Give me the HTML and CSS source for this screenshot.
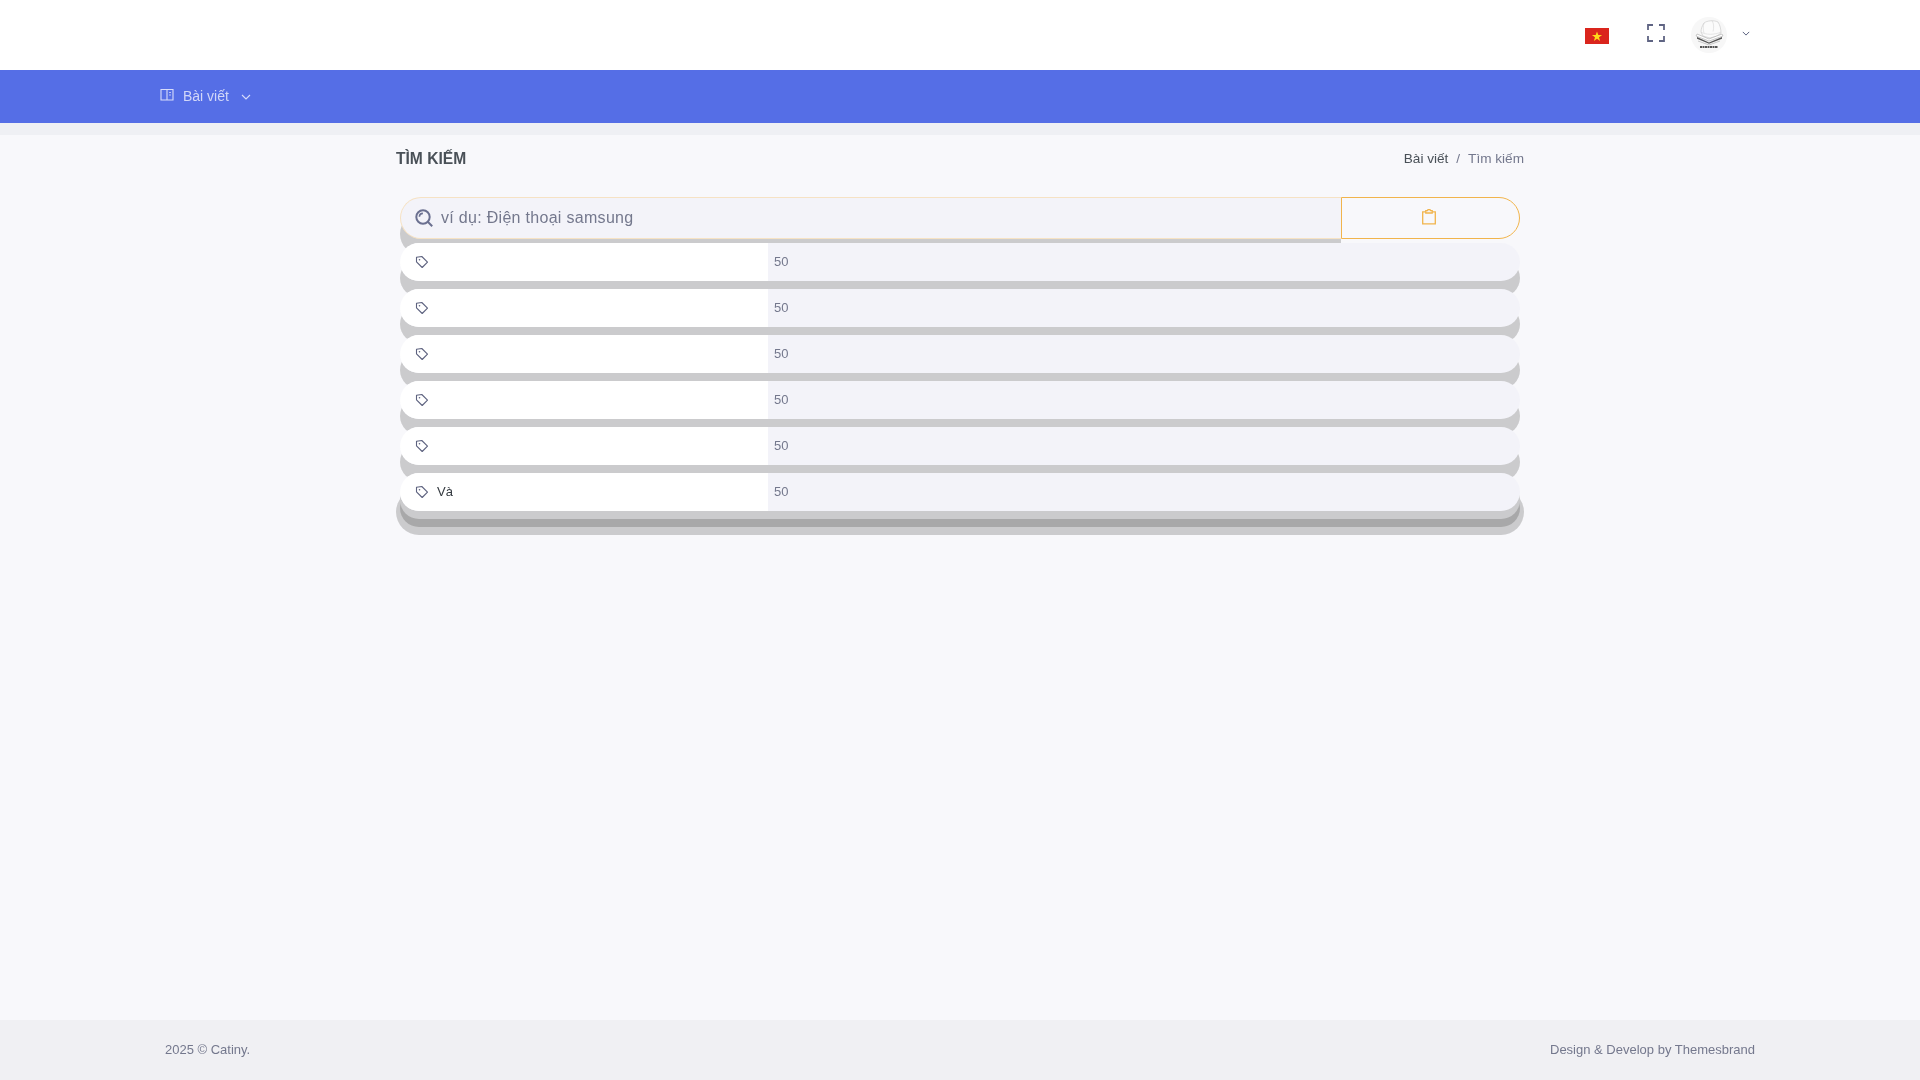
FILE: index.html
```html
<!DOCTYPE html>
<html lang="vi">
<head>
<meta charset="utf-8">
<title>Tìm kiếm</title>
<link rel="stylesheet" href="styles.css">
</head>
<body>
<header class="topbar">
  <div class="topbar-tools">
    <svg class="flag" viewBox="0 0 24 16" aria-hidden="true"><rect width="24" height="16" fill="#da251d"/><polygon fill="#ffd91a" points="12,3.4 13.3,7 17.1,7 14,9.3 15.1,12.9 12,10.7 8.9,12.9 10,9.3 6.9,7 10.7,7"/></svg>
    <svg class="fullscreen" viewBox="0 0 18 18" aria-hidden="true"><path d="M1 6V1h5M12 1h5v5M17 12v5h-5M6 17H1v-5" fill="none" stroke="#5f6483" stroke-width="1.800"/></svg>
    <span class="avatar">
      <svg viewBox="0 0 36 36" aria-hidden="true">
        <circle cx="18" cy="18" r="18" fill="#f7f7f7"/>
        <path d="M10 15c0-3 1-6 3-9 3-2.500 10-3 14-1 2 3 3 7 3 11l-4 3-7 2-7-2z" fill="#fbfbfb" stroke="#c4c4c4" stroke-width=".6"/>
        <path d="M13 6c-1 3-1 7 0 10M21 3.500c2 3 2 8 1 11M10 15c4 3 14 3 20 0" fill="none" stroke="#cfcfcf" stroke-width=".5"/>
        <path d="M6 17l12 5 13-5 1 2-14 5-13-5z" fill="#fff" stroke="#999" stroke-width=".5"/>
        <path d="M6 20l12 5.500L31 20v1.800l-13 5-12-5z" fill="#555"/>
        <path d="M7 24l11 4 11-4" fill="none" stroke="#aaa" stroke-width=".6"/>
        <path d="M9 30h18" stroke="#222" stroke-width="1.300" stroke-dasharray="2 .5"/>
      </svg>
    </span>
    <svg class="caret caret-dark" viewBox="0 0 10 6" aria-hidden="true"><path d="M1 1l4 4 4-4" fill="none" stroke="#555b7a" stroke-width="1.200"/></svg>
  </div>
</header>
<nav class="topnav">
  <a class="nav-item">
    <svg class="nav-icon" viewBox="0 0 14 14" aria-hidden="true"><path d="M1 1.500h12v10.500H1zM7 1.500V12M9.200 4.500h1.600M9.200 7h1.600" fill="none" stroke="#d7dcfa" stroke-width="1.100"/></svg>
    <span>Bài viết</span>
    <svg class="caret" viewBox="0 0 10 6" aria-hidden="true"><path d="M1 1l4 4 4-4" fill="none" stroke="#d7dcfa" stroke-width="1.100"/></svg>
  </a>
</nav>
<main class="content">
  <div class="title-row">
    <h1 class="page-title">TÌM KIẾM</h1>
    <div class="breadcrumb"><a>Bài viết</a><span class="sep">/</span><span class="current">Tìm kiếm</span></div>
  </div>
  <div class="results">
    <div class="search">
      <div class="search-field">
        <svg class="search-icon" viewBox="0 0 18 18" aria-hidden="true"><circle cx="8" cy="8" r="6.700" fill="none" stroke="#6b7090" stroke-width="2"/><path d="M12.800 12.800l4.400 4.400" stroke="#6b7090" stroke-width="2"/><path d="M4.400 7.800a3.500 3.500 0 0 1 3.500-3.400" fill="none" stroke="#6b7090" stroke-width="1.600"/></svg>
        <span class="placeholder">ví dụ: Điện thoại samsung</span>
      </div>
      <button class="search-btn" type="button">
        <svg viewBox="0 0 16 16" aria-hidden="true"><path d="M4.800 2.800H1.700v12h12.600v-12h-3.100M4.800 1.700h1.800a1.400 1.400 0 0 1 2.800 0h1.800v2.300H4.800z" fill="none" stroke="#f1b44c" stroke-width="1.300"/></svg>
      </button>
    </div>
    <div class="row"><div class="cell-name"><svg class="tag" viewBox="0 0 14 14"><path d="M1.500 2.200l5.300-.7 5.700 5.700-5.300 5.300-5.700-5.700z" fill="none" stroke="#5d627f" stroke-width="1.100" stroke-linejoin="round"/><circle cx="4.500" cy="4.800" r=".8" fill="#5d627f"/></svg></div><div class="cell-count">50</div></div>
    <div class="row"><div class="cell-name"><svg class="tag" viewBox="0 0 14 14"><path d="M1.500 2.200l5.300-.7 5.700 5.700-5.300 5.300-5.700-5.700z" fill="none" stroke="#5d627f" stroke-width="1.100" stroke-linejoin="round"/><circle cx="4.500" cy="4.800" r=".8" fill="#5d627f"/></svg></div><div class="cell-count">50</div></div>
    <div class="row"><div class="cell-name"><svg class="tag" viewBox="0 0 14 14"><path d="M1.500 2.200l5.300-.7 5.700 5.700-5.300 5.300-5.700-5.700z" fill="none" stroke="#5d627f" stroke-width="1.100" stroke-linejoin="round"/><circle cx="4.500" cy="4.800" r=".8" fill="#5d627f"/></svg></div><div class="cell-count">50</div></div>
    <div class="row"><div class="cell-name"><svg class="tag" viewBox="0 0 14 14"><path d="M1.500 2.200l5.300-.7 5.700 5.700-5.300 5.300-5.700-5.700z" fill="none" stroke="#5d627f" stroke-width="1.100" stroke-linejoin="round"/><circle cx="4.500" cy="4.800" r=".8" fill="#5d627f"/></svg></div><div class="cell-count">50</div></div>
    <div class="row"><div class="cell-name"><svg class="tag" viewBox="0 0 14 14"><path d="M1.500 2.200l5.300-.7 5.700 5.700-5.300 5.300-5.700-5.700z" fill="none" stroke="#5d627f" stroke-width="1.100" stroke-linejoin="round"/><circle cx="4.500" cy="4.800" r=".8" fill="#5d627f"/></svg></div><div class="cell-count">50</div></div>
    <div class="row row-last"><div class="cell-name"><svg class="tag" viewBox="0 0 14 14"><path d="M1.500 2.200l5.300-.7 5.700 5.700-5.300 5.300-5.700-5.700z" fill="none" stroke="#5d627f" stroke-width="1.100" stroke-linejoin="round"/><circle cx="4.500" cy="4.800" r=".8" fill="#5d627f"/></svg><span class="tag-name">Và</span></div><div class="cell-count">50</div></div>
  </div>
</main>
<footer class="footer">
  <div class="footer-text">2025 © Catiny.</div>
  <div class="footer-text">Design &amp; Develop by Themesbrand</div>
</footer>
</body>
</html>
```
FILE: styles.css
```css
* { box-sizing: border-box; }
html, body { height: 100%; }
body {
  margin: 0;
  min-height: 100vh;
  display: flex;
  flex-direction: column;
  background: #f8f8fb;
  color: #495057;
  font-family: "Liberation Sans", Arial, sans-serif;
  font-size: 13px;
}
.topbar {
  height: 70px;
  flex: none;
  background: #fff;
  display: flex;
  justify-content: flex-end;
  padding-right: 170px;
}
.topbar-tools { display: flex; align-items: center; }
.flag { width: 24px; height: 16px; margin-top: 2px; }
.fullscreen { width: 18px; height: 18px; margin-left: 38px; margin-top: -4px; }
.avatar { width: 36px; height: 36px; margin-left: 26px; margin-top: -1px; }
.avatar svg { width: 36px; height: 36px; display: block; }
.caret { width: 8px; height: 5px; display: block; }
.caret-dark { margin-left: 15px; margin-top: -3px; }
.topnav {
  height: 53px;
  flex: none;
  background: #556ee6;
  box-shadow: 0 12px 0 #eff0f4;
  display: flex;
  align-items: center;
  padding-left: 160px;
  padding-bottom: 2px;
}
.nav-item { display: flex; align-items: center; color: #d2d7f8; font-size: 14px; will-change: opacity; }
.nav-icon { width: 14px; height: 14px; margin-right: 9px; margin-top: -2px; }
.nav-item .caret { margin-left: 12px; width: 10px; height: 6px; margin-top: 2px; }
.content {
  flex: 1;
  width: 1128px;
  margin: 0 auto;
  padding-top: 28px;
  will-change: opacity;
}
.title-row { display: flex; justify-content: space-between; align-items: center; height: 15px; }
.page-title { margin: 0; font-size: 15.6px; font-weight: 700; color: #495057; line-height: 15px; }
.breadcrumb { font-size: 13.6px; color: #74788d; display: flex; }
.breadcrumb a { color: #495057; }
.sep { margin: 0 8px; }
.results {
  margin-top: 31px;
  padding: 0 4px;
  display: flex;
  flex-direction: column;
  gap: 8px;
}
.search { display: flex; height: 42px; margin-bottom: -4px; position: relative; }
.search-field {
  flex: 1;
  display: flex;
  align-items: center;
  padding-left: 14px;
  background: #f3f3f9;
  border: 1px solid #f6e2c4;
  border-right: 0;
  border-radius: 21px 0 0 21px;
  box-shadow: 0 16px 0 #cbcbcd;
}
.search-icon { width: 18px; height: 18px; margin-right: 8px; }
.placeholder { font-size: 16px; color: #74788d; letter-spacing: .3px; }
.search-btn {
  width: 179px;
  padding: 0;
  background: #f8f8fb;
  border: 1px solid #f1b44c;
  border-radius: 0 21px 21px 0;
  display: flex;
  align-items: center;
  justify-content: center;
  position: relative;
}
.search-btn svg { width: 16px; height: 16px; margin-right: 3px; margin-top: -3px; }
.row {
  height: 38px;
  display: flex;
  background: #f3f3f9;
  border-radius: 19px;
  box-shadow: 0 16px 0 #cbcbcd;
  position: relative;
}
.cell-name {
  width: 368px;
  background: #fff;
  border-radius: 19px 0 0 19px;
  display: flex;
  align-items: center;
  padding-left: 15px;
  color: #343a40;
}
.tag { width: 14px; height: 14px; margin-right: 8px; }
.tag-name { margin-bottom: 2px; }
.cell-count { padding-left: 6px; line-height: 38px; color: #74788d; }
.row-last { box-shadow: 0 8px 0 #cbcbcd, 0 16px 0 #a8a8a9, 0 20px 0 4px #cbcbcd; }
.footer {
  flex: none;
  height: 60px;
  background: #f0f0f3;
  color: #74788d;
  padding: 0 165px 2px;
  display: flex;
  align-items: center;
  justify-content: space-between;
}
.footer-text { will-change: opacity; }
```
